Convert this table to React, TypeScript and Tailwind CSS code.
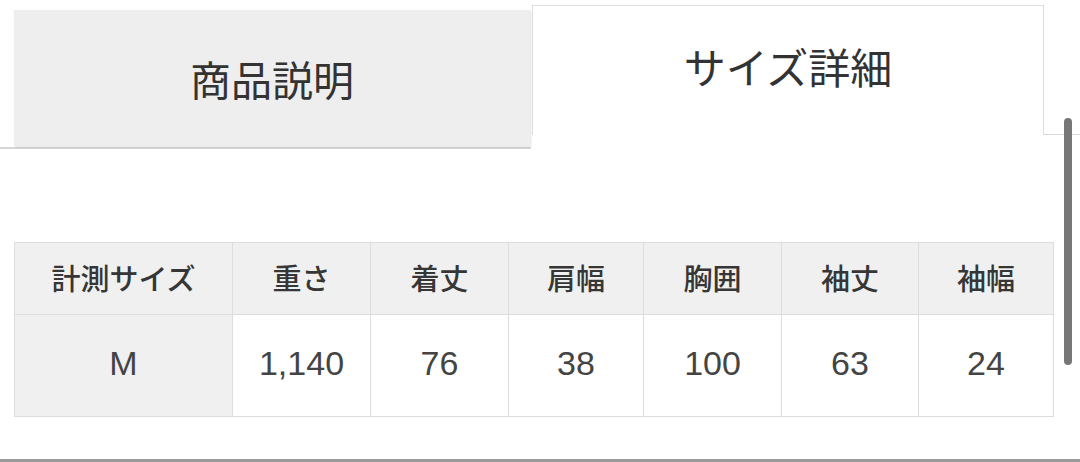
import React from "react";

const headers = ["計測サイズ", "重さ", "着丈", "肩幅", "胸囲", "袖丈", "袖幅"];
const values = ["M", "1,140", "76", "38", "100", "63", "24"];

export default function App() {
  return (
    <div className="relative flex h-[462px] w-[1080px] flex-col overflow-hidden bg-white" style={{ fontFamily: '"Noto Sans CJK JP", "Noto Sans", sans-serif' }}>
      {/* tabs */}
      <div className="flex items-start">
        <div className="w-[531px] border-b-2 border-[#d6d6d6] pb-[1px] pl-[14px] pt-[10px]">
          <div className="flex h-[136px] w-[516px] items-center justify-center bg-[#eeeeee] shadow-[1px_1px_2px_rgba(0,0,0,0.12)]">
            <span className="text-[41px] leading-none text-[#333333]">商品説明</span>
          </div>
        </div>
        <div className="ml-[1px] mt-[5px] flex h-[130px] w-[512px] items-center justify-center border-x border-t border-[#dedede] bg-white pb-[10px]">
          <span className="text-[42px] leading-none text-[#333333]">サイズ詳細</span>
        </div>
        <div className="h-[135px] flex-1 border-b border-[#d8d8d8]" />
      </div>

      {/* table */}
      <div className="ml-[14px] mt-[93px] w-fit bg-[#dddddd] p-px">
        <div className="grid grid-cols-[217px_137px_137px_134px_137px_136px_134px] grid-rows-[71px_101px] gap-px">
          {headers.map((h) => (
            <div key={h} className="flex items-center justify-center bg-[#f0f0f0] pb-[2px] text-[29px] font-medium leading-none text-[#363636]">
              {h}
            </div>
          ))}
          {values.map((v, i) => (
            <div
              key={i}
              className={`flex items-center justify-center pb-[6px] text-[34px] leading-none text-[#444444] ${i === 0 ? "bg-[#f0f0f0]" : "bg-white"}`}
              style={{ fontFamily: '"Liberation Sans", Arial, sans-serif' }}
            >
              {v}
            </div>
          ))}
        </div>
      </div>

      <div className="mt-auto h-[3px] w-full bg-[#9a9a9a]" />

      {/* scrollbar */}
      <div className="absolute left-[1064px] top-[118px] h-[247px] w-[8px] rounded-full bg-[#777777]" />
    </div>
  );
}
